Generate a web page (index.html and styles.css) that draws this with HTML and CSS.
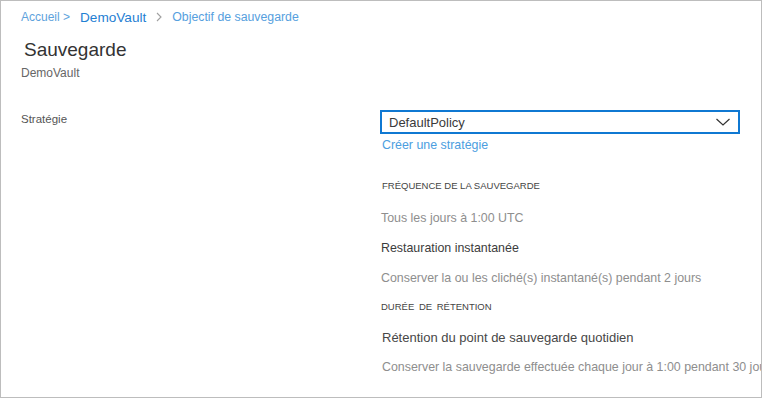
FILE: index.html
```html
<html>
  <head>
    <title>Sauvegarde</title>
    <link rel="stylesheet" href="styles.css">
  </head>
  <body>
    <div class="frame">
      <!-- Fil d'Ariane -->
      <div class="crumbs">
        <span class="crumb-home">Accueil &gt;</span>
        <span class="crumb-vault">DemoVault</span>
        <svg class="crumb-sep" width="10" height="12" viewBox="0 0 10 12"><path d="M3 2 L7 6 L3 10" fill="none" stroke="#a0a0a0" stroke-width="1.1"/></svg>
        <span class="crumb-page">Objectif de sauvegarde</span>
      </div>
      <!-- En-tête -->
      <h1 class="title">Sauvegarde</h1>
      <div class="subtitle">DemoVault</div>
      <!-- Formulaire -->
      <div class="form">
        <div class="label">Stratégie</div>
        <div class="field">
          <div class="select">
            <span>DefaultPolicy</span>
            <svg width="16" height="10" viewBox="0 0 16 10"><path d="M1.5 2 L8 8 L14.5 2" fill="none" stroke="#333" stroke-width="1.2"/></svg>
          </div>
          <div class="link">Créer une stratégie</div>
          <div class="section first">FRÉQUENCE DE LA SAUVEGARDE</div>
          <div class="muted m16">Tous les jours à 1:00 UTC</div>
          <div class="item">Restauration instantanée</div>
          <div class="muted m14">Conserver la ou les cliché(s) instantané(s) pendant 2 jours</div>
          <div class="section second">DURÉE DE RÉTENTION</div>
          <div class="item big">Rétention du point de sauvegarde quotidien</div>
          <div class="muted m12">Conserver la sauvegarde effectuée chaque jour à 1:00 pendant 30 jours</div>
        </div>
      </div>
    </div>
  </body>
</html>
```

FILE: styles.css
```css
/* Page */
body {
  margin: 0;
  background-color: #ffffff;
  font-family: "Liberation Sans", Arial, sans-serif;
}

/* Cadre gris autour du panneau */
.frame {
  width: 740px;
  height: 390px;
  border: 1px solid #bdbdbd;
  padding: 6px 0 0 20px;
  overflow: hidden;
}

/* Fil d'Ariane */
.crumbs {
  display: flex;
  align-items: center;
  height: 20px;
  white-space: nowrap;
}
.crumb-home {
  font-size: 12px;
  color: #5ea2dc;
}
.crumb-vault {
  font-size: 13.6px;
  color: #1f80d3;
  margin-left: 10px;
}
.crumb-sep {
  margin-left: 8px;
}
.crumb-page {
  font-size: 12.3px;
  color: #56a0de;
  margin-left: 8px;
}

/* En-tête */
.title {
  margin: 10px 0 0 3px;
  font-size: 19px;
  font-weight: normal;
  line-height: 26px;
  color: #333333;
}
.subtitle {
  margin-top: 2px;
  font-size: 12px;
  line-height: 16px;
  color: #666666;
}

/* Formulaire en deux colonnes */
.form {
  display: grid;
  grid-template-columns: 359px 1fr;
  margin-top: 29px;
}
.label {
  font-size: 11.5px;
  line-height: 18px;
  color: #555555;
}
.field {
  white-space: nowrap;
}

/* Liste déroulante */
.select {
  display: flex;
  align-items: center;
  justify-content: space-between;
  width: 360px;
  height: 24px;
  box-sizing: border-box;
  border: 2px solid #0f78d2;
  padding: 0 7px;
  font-size: 13px;
  color: #3a3a3a;
}

.link {
  margin: 2px 0 0 2px;
  font-size: 12.4px;
  line-height: 18px;
  color: #4c9ee0;
}

/* Titres de section */
.section {
  font-size: 9.5px;
  line-height: 16px;
  color: #444444;
  margin-left: 2px;
}
.section.first {
  margin-top: 24px;
}
.section.second {
  margin-top: 13px;
  margin-left: 1px;
  word-spacing: 2px;
}

/* Textes */
.muted {
  font-size: 12.4px;
  line-height: 16px;
  color: #8e8e8e;
  margin-left: 1px;
}
.m16 { margin-top: 16px; }
.m14 { margin-top: 14px; }
.m12 { margin-top: 12px; margin-left: 2px; }

.item {
  margin: 14px 0 0 1px;
  font-size: 12.4px;
  line-height: 16px;
  color: #3c3c3c;
}
.item.big {
  font-size: 13px;
  line-height: 18px;
  margin-left: 2px;
  color: #474747;
}
```
